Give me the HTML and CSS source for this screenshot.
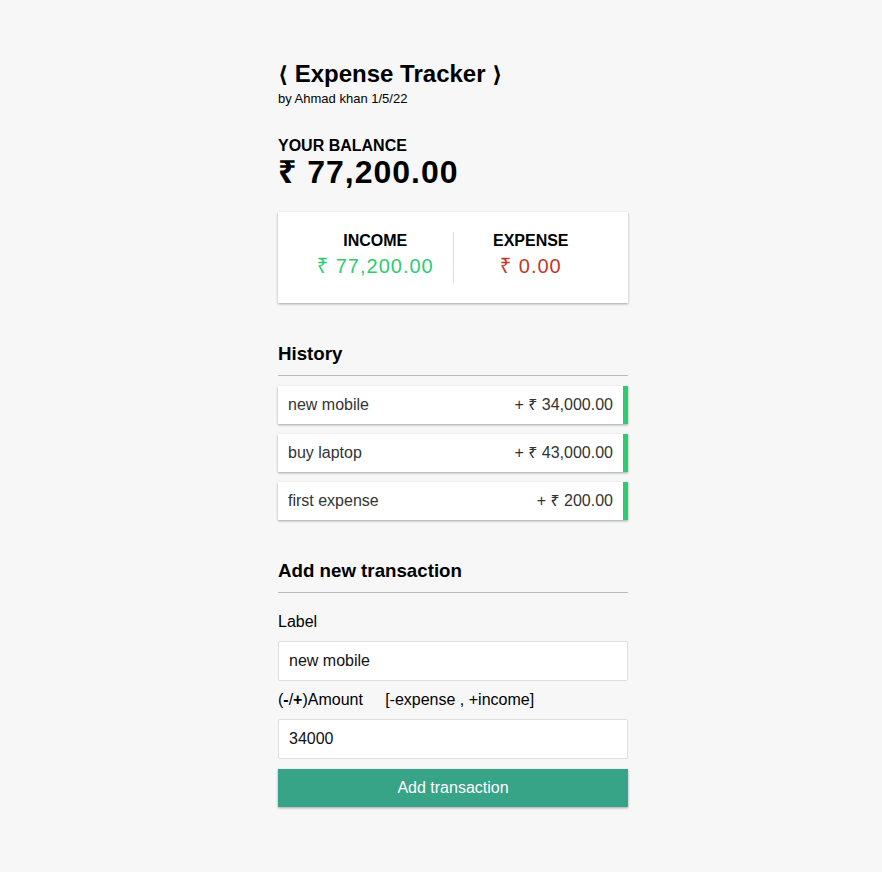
FILE: index.html
```html
<!DOCTYPE html>
<html lang="en">
<head>
<meta charset="utf-8">
<title>Expense Tracker</title>
<link rel="stylesheet" href="styles.css">
</head>
<body>
<div class="app">
  <h2 class="title"><span class="br">⟨</span> Expense Tracker <span class="br">⟩</span></h2>
  <div class="byline">by Ahmad khan 1/5/22</div>

  <h4 class="caps balance-label">Your Balance</h4>
  <h1 class="balance">₹ 77,200.00</h1>

  <div class="inc-exp">
    <div class="inc-exp-col">
      <h4 class="caps">Income</h4>
      <p class="money plus">₹ 77,200.00</p>
    </div>
    <div class="inc-exp-col">
      <h4 class="caps">Expense</h4>
      <p class="money minus">₹ 0.00</p>
    </div>
  </div>

  <h3 class="section">History</h3>
  <ul class="list">
    <li class="item plus"><span>new mobile</span><span>+ ₹ 34,000.00</span></li>
    <li class="item plus"><span>buy laptop</span><span>+ ₹ 43,000.00</span></li>
    <li class="item plus"><span>first expense</span><span>+ ₹ 200.00</span></li>
  </ul>

  <h3 class="section">Add new transaction</h3>
  <form class="form">
    <div class="field">
      <label class="lbl" for="text">Label</label>
      <input class="inp" type="text" id="text" value="new mobile">
    </div>
    <div class="field">
      <label class="lbl" for="amount">(<b>-</b>/<b>+</b>)Amount &nbsp; &nbsp; [-expense , +income]</label>
      <input class="inp" type="text" id="amount" value="34000">
    </div>
    <button class="btn" type="button">Add transaction</button>
  </form>
</div>
</body>
</html>
```

FILE: styles.css
```css
* { box-sizing: border-box; }

html, body {
  margin: 0;
  padding: 0;
}

body {
  background-color: #f7f7f7;
  font-family: "Liberation Sans", Arial, "Noto Sans", "DejaVu Sans", sans-serif;
  color: #000;
  padding-left: 24px;
}

.app {
  width: 350px;
  margin: 0 auto;
  padding-top: 60px;
  padding-bottom: 30px;
}

.title {
  margin: 0;
  font-size: 24px;
  line-height: 28px;
  font-weight: bold;
}

.br {
  font-family: "DejaVu Sans", sans-serif;
  font-weight: bold;
  font-size: 22px;
}

.byline {
  margin-top: 2px;
  font-size: 13px;
  line-height: 15px;
}

.caps {
  margin: 0;
  text-transform: uppercase;
  font-size: 16px;
  line-height: 18px;
  font-weight: bold;
}

.balance-label {
  margin-top: 31px;
}

.balance {
  margin: 0;
  font-size: 32px;
  line-height: 35px;
  letter-spacing: 1px;
  font-weight: bold;
}

.inc-exp {
  background-color: #fff;
  box-shadow: 0 1px 3px rgba(0, 0, 0, 0.12), 0 1px 2px rgba(0, 0, 0, 0.24);
  padding: 20px;
  display: flex;
  justify-content: space-between;
  margin: 22px 0 20px;
}

.inc-exp-col {
  flex: 1;
  text-align: center;
}

.inc-exp-col:first-child {
  border-right: 1px solid #dedede;
}

.money {
  font-size: 20px;
  line-height: 23px;
  letter-spacing: 1px;
  margin: 5px 0;
}

.money.plus { color: #2ecc71; }
.money.minus { color: #c0392b; }

.section {
  font-size: 18.72px;
  line-height: 21px;
  font-weight: bold;
  border-bottom: 1px solid #bbb;
  padding-bottom: 11px;
  margin: 40px 0 10px;
}

.list {
  list-style: none;
  padding: 0;
  margin: 0 0 38px;
}

.item {
  background-color: #fff;
  box-shadow: 0 1px 3px rgba(0, 0, 0, 0.12), 0 1px 2px rgba(0, 0, 0, 0.24);
  color: #333;
  display: flex;
  justify-content: space-between;
  padding: 10px;
  margin: 10px 0;
  font-size: 16px;
  line-height: 18px;
}

.item.plus { border-right: 5px solid #2ecc71; }
.item.minus { border-right: 5px solid #c0392b; }

.form { margin: 0; }

.field { line-height: 18px; }

.lbl {
  display: inline-block;
  margin: 10px 0;
  font-size: 16px;
  line-height: 18px;
}

.inp {
  display: block;
  width: 100%;
  height: 40px;
  border: 1px solid #dedede;
  border-radius: 2px;
  font-size: 16px;
  font-family: inherit;
  padding: 10px;
  background: #fff;
  color: #111;
  outline: none;
}

.btn {
  display: block;
  width: 100%;
  height: 38px;
  background-color: #37a387;
  box-shadow: 0 1px 3px rgba(0, 0, 0, 0.12), 0 1px 2px rgba(0, 0, 0, 0.24);
  color: #fff;
  border: 0;
  font-family: inherit;
  font-size: 16px;
  line-height: 18px;
  margin: 10px 0 30px;
  padding: 10px;
  cursor: pointer;
}
```
